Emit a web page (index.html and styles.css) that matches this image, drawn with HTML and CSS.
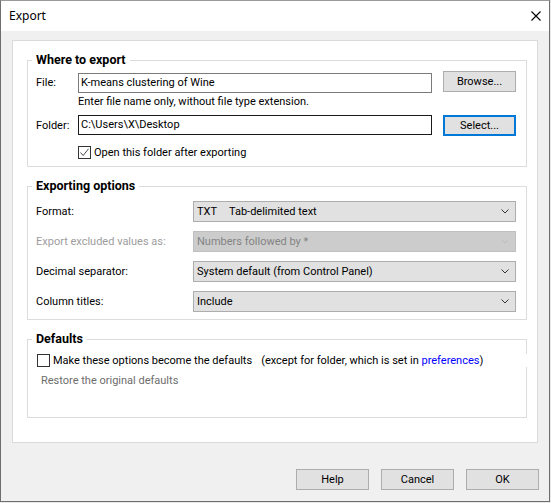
FILE: index.html
```html
<!DOCTYPE html>
<html lang="en">
<head>
    <meta charset="UTF-8">
    <title>Export</title>
    <link rel="stylesheet" href="styles.css">
</head>
<body>
    <div class="window">
        <!-- title bar -->
        <div class="titlebar">
            <span class="title">Export</span>
            <svg class="close" width="10" height="10" viewBox="0 0 10 10">
                <path d="M0.5 0.5 L9.5 9.5 M9.5 0.5 L0.5 9.5" stroke="#000" stroke-width="1.1" fill="none"/>
            </svg>
        </div>

        <div class="client">
            <div class="panel">
                <!-- where to export -->
                <fieldset class="group group-where">
                    <legend>Where to export</legend>
                    <div class="path-row first">
                        <span class="path-label">File:</span>
                        <div class="textbox">K-means clustering of Wine</div>
                        <button class="btn">Browse...</button>
                    </div>
                    <div class="hint">Enter file name only, without file type extension.</div>
                    <div class="path-row second">
                        <span class="path-label">Folder:</span>
                        <div class="textbox focused">C:\Users\X\Desktop</div>
                        <button class="btn default">Select...</button>
                    </div>
                    <div class="check-row open-row">
                        <span class="checkbox">
                            <svg width="11" height="11" viewBox="0 0 11 11">
                                <path d="M1.5 5.5 L4.2 8.5 L9.5 1.8" stroke="#4a4a4a" stroke-width="1" fill="none"/>
                            </svg>
                        </span>
                        Open this folder after exporting
                    </div>
                </fieldset>

                <!-- exporting options -->
                <fieldset class="group group-options">
                    <legend>Exporting options</legend>
                    <div class="option-row">
                        <span class="option-label">Format:</span>
                        <div class="combo">
                            <span class="combo-text"><span class="fmt">TXT</span>Tab-delimited text</span>
                            <svg class="chevron" width="8" height="5" viewBox="0 0 8 5"><path d="M0.5 0.5 L4 4 L7.5 0.5" fill="none" stroke="#333" stroke-width="1"/></svg>
                        </div>
                    </div>
                    <div class="option-row">
                        <span class="option-label disabled">Export excluded values as:</span>
                        <div class="combo disabled">
                            <span class="combo-text">Numbers followed by *</span>
                            <svg class="chevron" width="8" height="5" viewBox="0 0 8 5"><path d="M0.5 0.5 L4 4 L7.5 0.5" fill="none" stroke="#bdbdbd" stroke-width="1"/></svg>
                        </div>
                    </div>
                    <div class="option-row">
                        <span class="option-label">Decimal separator:</span>
                        <div class="combo">
                            <span class="combo-text">System default (from Control Panel)</span>
                            <svg class="chevron" width="8" height="5" viewBox="0 0 8 5"><path d="M0.5 0.5 L4 4 L7.5 0.5" fill="none" stroke="#333" stroke-width="1"/></svg>
                        </div>
                    </div>
                    <div class="option-row">
                        <span class="option-label">Column titles:</span>
                        <div class="combo">
                            <span class="combo-text">Include</span>
                            <svg class="chevron" width="8" height="5" viewBox="0 0 8 5"><path d="M0.5 0.5 L4 4 L7.5 0.5" fill="none" stroke="#333" stroke-width="1"/></svg>
                        </div>
                    </div>
                </fieldset>

                <!-- defaults -->
                <fieldset class="group group-defaults">
                    <legend>Defaults</legend>
                    <div class="check-row defaults-row">
                        <span class="checkbox"></span>
                        Make these options become the defaults
                        <span class="aside">(except for folder, which is set in <a class="link" href="#">preferences</a>)</span>
                    </div>
                    <div class="restore">Restore the original defaults</div>
                </fieldset>
            </div>

            <div class="buttons">
                <button class="btn">Help</button>
                <button class="btn">Cancel</button>
                <button class="btn">OK</button>
            </div>
        </div>
    </div>
</body>
</html>
```

FILE: styles.css
```css
* {
    box-sizing: border-box;
}

html, body {
    margin: 0;
    padding: 0;
}

body {
    font-family: Roboto, "Noto Sans", sans-serif;
    font-size: 11px;
    color: #000;
    background: #e8e8e8;
}

.window {
    width: 550px;
    height: 502px;
    border: 1px solid #6e6e6e;
    border-top-color: #9a9a9a;
    display: flex;
    flex-direction: column;
    background: #fff;
}

/* title bar */
.titlebar {
    height: 30px;
    flex: none;
    display: flex;
    align-items: center;
    padding: 0 8px 0 8px;
    background: #fff;
}

.title {
    font-family: "Noto Sans", sans-serif;
    font-size: 12px;
    line-height: 16px;
}

.close {
    margin-left: auto;
    margin-top: -1px;
}

/* grey client area */
.client {
    flex: 1;
    background: #f0f0f0;
    padding: 9px 10px 11px 11px;
    display: flex;
    flex-direction: column;
}

.panel {
    height: 403px;
    margin-right: 1px;
    background: #fff;
    border: 1px solid #dadada;
    padding: 12px 10px 0 14px;
}

/* group boxes */
.group {
    margin: 0;
    min-width: 0;
    border: 1px solid #dcdcdc;
    padding: 0 10px 0 4px;
}

.group legend {
    padding: 0 4px;
    font-size: 12.5px;
    font-weight: bold;
    line-height: 14px;
}

.group > div {
    margin-left: 4px;
}

.group-options,
.group-defaults {
    margin-top: 12px;
}

.group-where {
    padding-bottom: 7px;
}

.group-options {
    padding-top: 8px;
    padding-bottom: 7px;
}

.group-defaults {
    padding-top: 8px;
    padding-bottom: 29px;
}

/* file / folder rows */
.path-row {
    display: flex;
    align-items: flex-start;
    height: 21px;
}

.path-row.first {
    margin-top: 4px;
    height: 22px;
}

.path-row.second {
    margin-top: 6px;
}

.path-label {
    width: 42px;
    flex: none;
    line-height: 21px;
}

.path-row.first .path-label {
    line-height: 24px;
}

.textbox {
    flex: 1;
    height: 20px;
    border: 1px solid #7a7a7a;
    background: #fff;
    padding-left: 2px;
    line-height: 18px;
    white-space: nowrap;
    overflow: hidden;
}

.path-row.first .textbox {
    margin-top: 2px;
}

.textbox.focused {
    border-color: #1a1a1a;
}

.hint {
    margin-top: 2px;
    padding-left: 42px;
    line-height: 14px;
}

.btn {
    width: 73px;
    height: 21px;
    flex: none;
    margin: 0;
    padding: 0;
    font: inherit;
    color: #000;
    background: #e1e1e1;
    border: 1px solid #adadad;
    line-height: 19px;
}

.path-row .btn {
    margin-left: 11px;
}

.btn.default {
    border: 2px solid #0078d7;
    line-height: 17px;
}

/* check boxes */
.check-row {
    display: flex;
    align-items: center;
    height: 13px;
    line-height: 13px;
    white-space: nowrap;
}

.checkbox {
    width: 13px;
    height: 13px;
    flex: none;
    border: 1px solid #333;
    background: #fff;
    margin-right: 3px;
    display: flex;
    align-items: center;
    justify-content: center;
}

.open-row {
    margin-top: 10px;
    padding-left: 42px;
}

.defaults-row {
    padding-left: 1px;
    margin-right: -13px;
    background: #fff;
}

.aside {
    margin-left: 9px;
}

.link {
    color: #0000ff;
    text-decoration: none;
}

.restore {
    margin-top: 7px;
    padding-left: 5px;
    line-height: 14px;
    color: #6d6d6d;
}

/* option rows with drop-downs */
.option-row {
    display: flex;
    height: 21px;
}

.option-row + .option-row {
    margin-top: 9px;
}

.option-label {
    width: 157px;
    flex: none;
    line-height: 21px;
}

.option-label.disabled {
    color: #9d9d9d;
}

.combo {
    flex: 1;
    display: flex;
    align-items: center;
    background: #e1e1e1;
    border: 1px solid #adadad;
    padding: 0 6px 0 3px;
}

.combo.disabled {
    background: #cccccc;
    border-color: #bfbfbf;
    color: #838383;
}

.combo-text {
    flex: 1;
    white-space: nowrap;
}

.fmt {
    display: inline-block;
    width: 32px;
}

.chevron {
    flex: none;
}

/* dialog buttons */
.buttons {
    margin-top: 26px;
    display: flex;
    justify-content: flex-end;
    gap: 12px;
}
```
